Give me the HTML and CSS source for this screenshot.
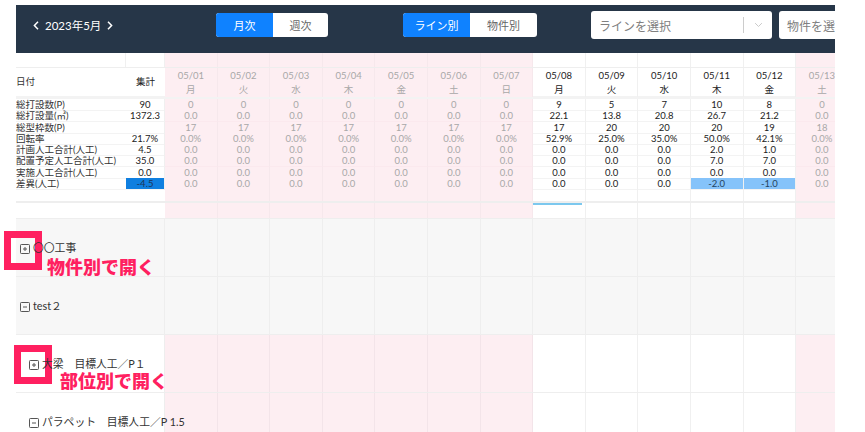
FILE: index.html
```html
<!DOCTYPE html>
<html lang="ja">
<head>
<meta charset="utf-8">
<title>工程表</title>
<link rel="stylesheet" href="styles.css">
</head>
<body>
<main class="app">
  <header class="topbar">
    <div class="month-nav">
      <svg class="chev" viewBox="0 0 6 9"><path d="M5 .8 1.400 4.500 5 8.200"/></svg>
      <span>2023年5月</span>
      <svg class="chev" viewBox="0 0 6 9"><path d="M1 .8 4.600 4.500 1 8.200"/></svg>
    </div>
    <div class="seg seg-a"><span class="on">月次</span><span>週次</span></div>
    <div class="seg seg-b"><span class="on">ライン別</span><span>物件別</span></div>
    <div class="select select-a"><span class="ph">ラインを選択</span><i class="sep"></i><svg class="down" viewBox="0 0 12 8"><path d="M1.500 1.500 6 6l4.500-4.500"/></svg></div>
    <div class="select select-b"><span class="ph">物件を選択</span></div>
  </header>

  <section class="sheet">
    <div class="row spacer"><b></b><b></b><b></b><b></b><b></b><b></b><b></b><b></b><b></b><b></b><b></b><b></b><b></b><b></b><b></b></div>
    <div class="row dates">
      <b class="lbl">日付</b><b>集計</b>
      <b>05/01<br>月</b><b>05/02<br>火</b><b>05/03<br>水</b><b>05/04<br>木</b><b>05/05<br>金</b><b>05/06<br>土</b><b>05/07<br>日</b><b>05/08<br>月</b><b>05/09<br>火</b><b>05/10<br>水</b><b>05/11<br>木</b><b>05/12<br>金</b><b>05/13<br>土</b>
    </div>
    <div class="row data"><b class="lbl">総打設数(P)</b><b>90</b><b>0</b><b>0</b><b>0</b><b>0</b><b>0</b><b>0</b><b>0</b><b>9</b><b>5</b><b>7</b><b>10</b><b>8</b><b>0</b></div>
    <div class="row data"><b class="lbl">総打設量(㎥)</b><b>1372.3</b><b>0.0</b><b>0.0</b><b>0.0</b><b>0.0</b><b>0.0</b><b>0.0</b><b>0.0</b><b>22.1</b><b>13.8</b><b>20.8</b><b>26.7</b><b>21.2</b><b>0.0</b></div>
    <div class="row data"><b class="lbl">総型枠数(P)</b><b></b><b>17</b><b>17</b><b>17</b><b>17</b><b>17</b><b>17</b><b>17</b><b>17</b><b>20</b><b>20</b><b>20</b><b>19</b><b>18</b></div>
    <div class="row data"><b class="lbl">回転率</b><b>21.7%</b><b>0.0%</b><b>0.0%</b><b>0.0%</b><b>0.0%</b><b>0.0%</b><b>0.0%</b><b>0.0%</b><b>52.9%</b><b>25.0%</b><b>35.0%</b><b>50.0%</b><b>42.1%</b><b>0.0%</b></div>
    <div class="row data"><b class="lbl">計画人工合計(人工)</b><b>4.5</b><b>0.0</b><b>0.0</b><b>0.0</b><b>0.0</b><b>0.0</b><b>0.0</b><b>0.0</b><b>0.0</b><b>0.0</b><b>0.0</b><b>2.0</b><b>1.0</b><b>0.0</b></div>
    <div class="row data"><b class="lbl">配置予定人工合計(人工)</b><b>35.0</b><b>0.0</b><b>0.0</b><b>0.0</b><b>0.0</b><b>0.0</b><b>0.0</b><b>0.0</b><b>0.0</b><b>0.0</b><b>0.0</b><b>7.0</b><b>7.0</b><b>0.0</b></div>
    <div class="row data"><b class="lbl">実施人工合計(人工)</b><b>0.0</b><b>0.0</b><b>0.0</b><b>0.0</b><b>0.0</b><b>0.0</b><b>0.0</b><b>0.0</b><b>0.0</b><b>0.0</b><b>0.0</b><b>0.0</b><b>0.0</b><b>0.0</b></div>
    <div class="row data"><b class="lbl">差異(人工)</b><b class="neg-strong">-4.5</b><b>0.0</b><b>0.0</b><b>0.0</b><b>0.0</b><b>0.0</b><b>0.0</b><b>0.0</b><b>0.0</b><b>0.0</b><b>0.0</b><b class="neg">-2.0</b><b class="neg">-1.0</b><b>0.0</b></div>
    <div class="row tail"><b></b><b></b><b></b><b></b><b></b><b></b><b></b><b></b><b></b><b></b><b></b><b></b><b></b><b></b><b></b></div>
    <div class="row gutter"><b></b><b></b><b></b><b></b><b></b><b></b><b></b><b></b><b></b><b class="marked"></b><b></b><b></b><b></b><b></b><b></b></div>

    <div class="row group gray">
      <div class="name"><svg class="box" viewBox="0 0 10 10"><rect x=".5" y=".5" width="9" height="9" rx=".8"/><path d="M3 5h4M5 3v4"/></svg><span>〇〇工事</span></div>
      <b></b><b></b><b></b><b></b><b></b><b></b><b></b><b></b><b></b><b></b><b></b><b></b><b></b>
    </div>
    <div class="row group gray">
      <div class="name"><svg class="box" viewBox="0 0 10 10"><rect x=".5" y=".5" width="9" height="9" rx=".8"/><path d="M3 5h4"/></svg><span>test２</span></div>
      <b></b><b></b><b></b><b></b><b></b><b></b><b></b><b></b><b></b><b></b><b></b><b></b><b></b>
    </div>
    <div class="row group">
      <div class="name sub"><svg class="box" viewBox="0 0 10 10"><rect x=".5" y=".5" width="9" height="9" rx=".8"/><path d="M3 5h4M5 3v4"/></svg><span>大梁　目標人工／P１</span></div>
      <b></b><b></b><b></b><b></b><b></b><b></b><b></b><b></b><b></b><b></b><b></b><b></b><b></b>
    </div>
    <div class="row group">
      <div class="name sub"><svg class="box" viewBox="0 0 10 10"><rect x=".5" y=".5" width="9" height="9" rx=".8"/><path d="M3 5h4"/></svg><span>パラペット　目標人工／P 1.5</span></div>
      <b></b><b></b><b></b><b></b><b></b><b></b><b></b><b></b><b></b><b></b><b></b><b></b><b></b>
    </div>
  </section>

  <i class="mark mark-a"></i>
  <strong class="note note-a">物件別で開く</strong>
  <i class="mark mark-b"></i>
  <strong class="note note-b">部位別で開く</strong>
</main>
</body>
</html>
```

FILE: styles.css
```css
* { box-sizing: border-box; }
html, body { margin: 0; height: 100%; background: #fff; overflow: hidden; }
body { font-family: Lato, "Noto Sans CJK JP", sans-serif; color: #2b2b2b; }

.app { position: relative; width: 865px; height: 432px; padding: 5px 30px 0 16px; overflow: hidden; }

.topbar { display: flex; align-items: center; height: 48px; padding: 0 0 8px 17px; background: #263648; overflow: hidden; }
.month-nav { display: flex; align-items: center; gap: 6px; width: 183px; flex: none; color: #fff; font-size: 11.500px; }
.chev { width: 6px; height: 9px; fill: none; stroke: #fff; stroke-width: 1.5; }

.seg { display: flex; flex: none; height: 24px; border-radius: 3px; overflow: hidden; background: #fff; font-size: 11px; color: #666; }
.seg span { display: flex; align-items: center; justify-content: center; flex: 1; }
.seg .on { background: #0f82ff; color: #fff; }
.seg-a { width: 112px; }
.seg-a .on { flex: 0 0 57px; }
.seg-b { width: 134px; margin-left: 75px; }
.seg-b .on { flex: 0 0 67px; }

.select { display: flex; align-items: center; flex: none; width: 181px; height: 28px; padding-left: 8px; border-radius: 3px; background: #fff; font-size: 12px; color: #808080; }
.select-a { margin-left: 54px; }
.select-b { margin-left: 7px; }
.ph { flex: 1; white-space: nowrap; }
.sep { width: 1px; height: 16px; background: #ccc; }
.down { width: 9px; height: 6px; margin: 0 9px 0 10px; fill: none; stroke: #c4c4c4; stroke-width: 1.2; }

.sheet { width: 819px; overflow: hidden; }
.row { display: grid; grid-template-columns: 110px 39px repeat(13, 52.6px); width: 833px; }
.row b { display: block; font-weight: 400; text-align: center; border-right: 1px solid #f0f0f0; color: #222; white-space: nowrap; }

/* holiday columns: 05/01 to 05/07 and 05/13 */
.row:not(.group) > b:nth-child(n+3):nth-child(-n+9),
.row:not(.group) > b:nth-child(15) { background: #fdeef2; color: #a8a8a8; border-right-color: #f6e8ec; }

.row .lbl { text-align: left; color: #333; border-right: 0; }

.spacer { height: 15px; border-bottom: 1px solid #eee; }
.dates { height: 31px; border-bottom: 3px solid #f3f3f3; font-size: 9.500px; line-height: 14px; }
.dates b { padding-top: 1px; }
.dates .lbl, .dates b:nth-child(2) { padding-top: 7px; }
.dates b:nth-child(-n+2) { border-right: 0; }

.data { height: 11.300px; font-size: 9.500px; line-height: 11px; }
.data b { border-bottom: 1px solid #f3f3f3; }
.data > b:nth-child(n+3):nth-child(-n+9),
.data > b:nth-child(15) { border-bottom-color: #fbe9ee; }
.row .neg-strong { background: #0f7fe0; color: #1d3557; }
.row .neg { background: #85c3fa; color: #24435f; }

.tail { height: 14px; border-bottom: 2px solid #eee; }
.gutter { height: 15.600px; border-bottom: 1px solid #eee; }
.tail b:nth-child(-n+2), .gutter b:nth-child(-n+2) { border-right: 0; }

/* light-blue progress line on the ruling above the 05/08 column */
.marked::before { content: ""; display: block; width: 49px; height: 2px; background: #7cc8ee; }

.group { height: 58px; border-bottom: 1px solid #eee; }
/* the name cell is the first child here, so holiday columns start one child earlier */
.group > b:nth-child(-n+8),
.group > b:nth-child(14) { background: #fdeef2; border-right-color: #f3e4e9; }
.gray { background: #f7f7f7; }
.row.gray > b:nth-child(n) { background: #f7f7f7; border-right-color: #eee; }

/* the group name spans label + total columns; long names run over the day cells */
.name { position: relative; z-index: 1; grid-column: 1 / span 2; display: flex; align-items: center; gap: 3px; padding-left: 4px; font-size: 10.800px; color: #333; white-space: nowrap; border-right: 1px solid #eee; }
.name.sub { padding-left: 13px; }
.box { width: 10px; height: 10px; margin-top: 3px; flex: none; fill: none; stroke: #555; stroke-width: 1; }

.mark { position: absolute; width: 38px; height: 39px; border: 7px solid #ff2060; }
.mark-a { left: 4px; top: 231px; }
.mark-b { left: 14px; top: 345px; }
.note { position: absolute; font-family: "Noto Sans CJK JP", sans-serif; font-size: 18px; font-weight: 900; line-height: 20px; color: #ff2060; white-space: nowrap; }
.note-a { left: 47px; top: 256px; }
.note-b { left: 60px; top: 370px; }
```
